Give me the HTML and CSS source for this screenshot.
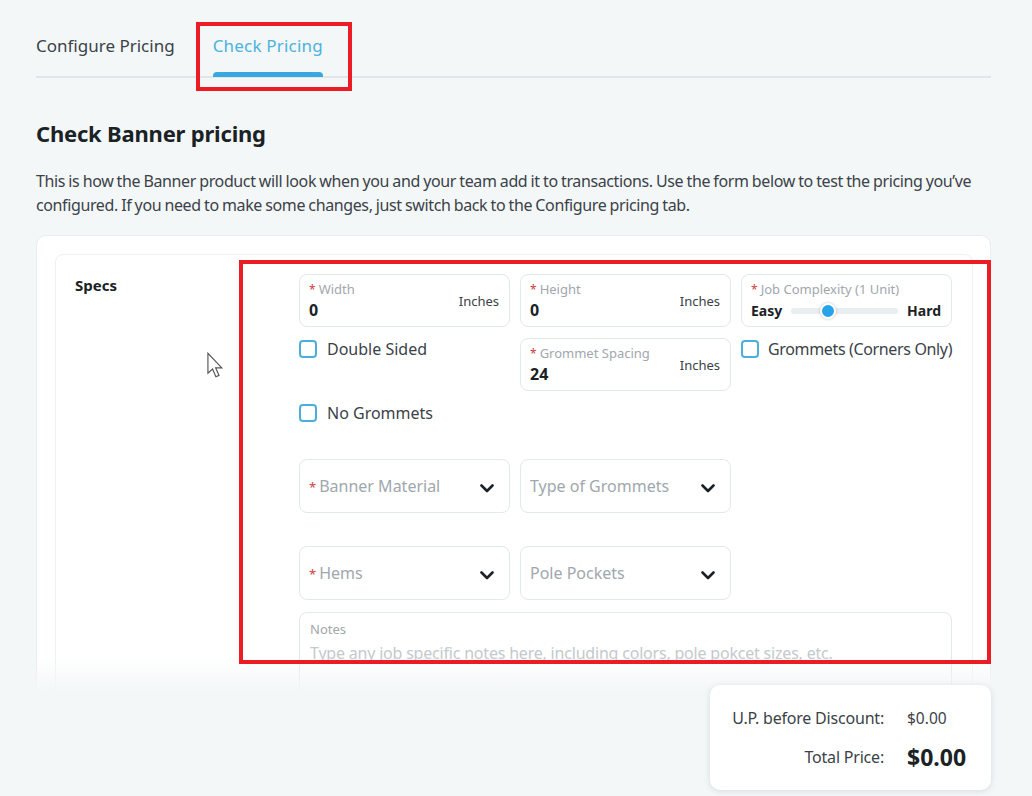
FILE: index.html
```html
<!DOCTYPE html>
<html>
<head>
<meta charset="utf-8">
<link rel="stylesheet" href="styles.css">
</head>
<body>
<div class="viewport">
  <div class="page">
    <nav class="tabs">
      <div class="tab">Configure Pricing</div>
      <div class="tab active">Check Pricing</div>
    </nav>
    <h1 class="title">Check Banner pricing</h1>
    <p class="intro">This is how the Banner product will look when you and your team add it to transactions. Use the form below to test the pricing you’ve configured. If you need to make some changes, just switch back to the Configure pricing tab.</p>
    <div class="card">
      <section class="section">
        <div class="section-label">Specs</div>
        <div class="form">
          <div class="field">
            <div class="field-main">
              <div class="flabel"><span class="req">*</span>Width</div>
              <div class="fvalue">0</div>
            </div>
            <div class="unit">Inches</div>
          </div>
          <div class="field">
            <div class="field-main">
              <div class="flabel"><span class="req">*</span>Height</div>
              <div class="fvalue">0</div>
            </div>
            <div class="unit">Inches</div>
          </div>
          <div class="field slider-field">
            <div class="flabel"><span class="req">*</span>Job Complexity (1 Unit)</div>
            <div class="slider-row">
              <span class="slabel">Easy</span>
              <div class="track"><span class="thumb"></span></div>
              <span class="slabel">Hard</span>
            </div>
          </div>

          <label class="check"><span class="box"></span>Double Sided</label>
          <div class="field">
            <div class="field-main">
              <div class="flabel"><span class="req">*</span>Grommet Spacing</div>
              <div class="fvalue">24</div>
            </div>
            <div class="unit">Inches</div>
          </div>
          <label class="check tight"><span class="box"></span>Grommets (Corners Only)</label>

          <label class="check row3"><span class="box"></span>No Grommets</label>

          <div class="select row4 col1"><span class="ph"><span class="req">*</span>Banner Material</span><svg class="chev" viewBox="0 0 14 9"><path d="M1.5 1.5 L7 7 L12.5 1.5"/></svg></div>
          <div class="select row4 col2"><span class="ph">Type of Grommets</span><svg class="chev" viewBox="0 0 14 9"><path d="M1.5 1.5 L7 7 L12.5 1.5"/></svg></div>

          <div class="select row5 col1"><span class="ph"><span class="req">*</span>Hems</span><svg class="chev" viewBox="0 0 14 9"><path d="M1.5 1.5 L7 7 L12.5 1.5"/></svg></div>
          <div class="select row5 col2"><span class="ph">Pole Pockets</span><svg class="chev" viewBox="0 0 14 9"><path d="M1.5 1.5 L7 7 L12.5 1.5"/></svg></div>

          <div class="notes">
            <div class="flabel">Notes</div>
            <div class="notes-ph">Type any job specific notes here, including colors, pole pokcet sizes, etc.</div>
          </div>
        </div>
      </section>
    </div>
  </div>
  <div class="fade"></div>
</div>
<footer class="footer">
  <div class="price-box">
    <div class="price-row"><span class="plabel">U.P. before Discount:</span><span class="pval">$0.00</span></div>
    <div class="price-row"><span class="plabel">Total Price:</span><span class="pval total">$0.00</span></div>
  </div>
</footer>

<div class="mark mark-tab"></div>
<div class="mark mark-form"></div>
<svg class="cursor" viewBox="0 0 13 21" width="18" height="27"><path d="M1 1 L1 16.5 L4.6 13.2 L7.2 19.2 L9.6 18.2 L7 12.3 L11.8 12.3 Z" fill="#fff" stroke="#555" stroke-width="0.9" stroke-linejoin="miter"/></svg>
</body>
</html>
```
FILE: styles.css
```css
* { box-sizing: border-box; }
html, body { margin: 0; padding: 0; }
body {
  background: #f3f7f8;
  font-family: "Noto Sans", "Open Sans", sans-serif;
  color: #3b4248;
  width: 1032px;
  height: 796px;
  overflow: hidden;
  position: relative;
}
.viewport {
  height: 690px;
  overflow: hidden;
  position: relative;
}
.page {
  padding: 0 41px 0 36px;
}
.tabs {
  display: flex;
  gap: 38px;
  height: 78px;
  border-bottom: 2px solid #e1e6e8;
}
.tab {
  font-size: 17px;
  line-height: 26px;
  padding-top: 33px;
  color: #3b4248;
  position: relative;
}
.tab.active { color: #4db2df; letter-spacing: 0.2px; }
.tab.active::after {
  content: "";
  position: absolute;
  left: 0; right: 0;
  bottom: -1px;
  height: 5px;
  background: #3aa8e0;
  border-radius: 4px 4px 0 0;
}
.title {
  margin: 40px 0 0;
  font-size: 22px;
  line-height: 30px;
  font-weight: 700;
  color: #1b2226;
  letter-spacing: -0.2px;
}
.intro {
  margin: 21px 0 0;
  font-size: 16px;
  line-height: 24px;
  color: #3b4248;
  letter-spacing: -0.38px;
  word-spacing: -0.5px;
}
.card {
  margin-top: 18px;
  background: #fff;
  border: 1px solid #e8edef;
  border-radius: 10px;
  padding: 18px 17px 0 18px;
  height: 600px;
}
.section {
  border: 1px solid #eef2f3;
  border-radius: 8px;
  display: grid;
  grid-template-columns: 243px 1fr;
  align-items: start;
  padding: 19px 20px 40px 0;
  height: 560px;
}
.section-label {
  padding-left: 19px;
  font-size: 15px;
  font-weight: 700;
  color: #1b2226;
  line-height: 22px;
}
.form {
  display: grid;
  grid-template-columns: 211px 211px 211px;
  column-gap: 10px;
  row-gap: 11px;
  align-items: start;
  align-content: start;
}
.field {
  height: 53px;
  border: 1px solid #e3e8ea;
  border-radius: 8px;
  padding: 6px 10px 0 9px;
  display: flex;
  justify-content: space-between;
  background: #fff;
}
.flabel {
  font-size: 13px;
  line-height: 16px;
  color: #a0a7ad;
  white-space: nowrap;
}
.req { color: #d0403f; margin-right: 3px; font-size: 12px; }
.fvalue {
  font-size: 16px;
  font-weight: 700;
  color: #1b2226;
  line-height: 22px;
  margin-top: 1px;
}
.unit {
  font-size: 13px;
  color: #3b4248;
  margin-top: 12px;
  line-height: 16px;
}
.slider-field { flex-direction: column; justify-content: flex-start; }
.slider-row {
  display: flex;
  align-items: center;
  margin-top: 4px;
  gap: 9px;
}
.slabel {
  font-size: 14px;
  font-weight: 700;
  color: #1b2226;
  line-height: 18px;
}
.track {
  flex: 1;
  height: 6px;
  background: #e9eef0;
  border-radius: 3px;
  position: relative;
}
.thumb {
  position: absolute;
  left: 29px;
  top: -5px;
  width: 16px;
  height: 16px;
  border-radius: 50%;
  background: #27a3ea;
  border: 2px solid #fff;
  box-shadow: 0 0 3px rgba(0,0,0,0.25);
}
.check {
  display: flex;
  align-items: center;
  gap: 10px;
  font-size: 16px;
  line-height: 22px;
  color: #3b4248;
  white-space: nowrap;
}
.check.tight { letter-spacing: -0.35px; gap: 9px; }
.box {
  width: 18px;
  height: 18px;
  border: 2px solid #4aafdc;
  border-radius: 4px;
  background: #fff;
  flex: none;
}
.row3 { grid-column: 1; }
.select {
  height: 54px;
  border: 1px solid #e3e8ea;
  border-radius: 8px;
  display: flex;
  align-items: center;
  justify-content: space-between;
  padding: 0 15px 0 9px;
  background: #fff;
}
.col1 { grid-column: 1; }
.col2 { grid-column: 2; }
.row4 { margin-top: 24px; }
.row5 { margin-top: 22px; }
.ph { font-size: 16px; color: #a0a7ad; line-height: 22px; }
.select .req { font-size: 13px; }
.chev { width: 14px; height: 9px; margin-top: 4px; }
.chev path { fill: none; stroke: #1b2226; stroke-width: 2.6; stroke-linecap: round; stroke-linejoin: round; }
.notes {
  grid-column: 1 / span 3;
  border: 1px solid #e3e8ea;
  border-radius: 8px;
  padding: 8px 10px 0;
  height: 90px;
  margin-top: 1px;
}
.notes-ph {
  font-size: 16px;
  color: #c3c9cd;
  line-height: 24px;
  margin-top: 4px;
  letter-spacing: -0.2px;
}
.fade {
  position: absolute;
  left: 0; right: 0; bottom: 0;
  height: 34px;
  background: linear-gradient(rgba(243,247,248,0), rgba(243,247,248,0.92));
}
.footer {
  display: flex;
  justify-content: flex-end;
  padding-right: 41px;
  margin-top: -5px;
  position: relative;
  z-index: 1;
}
.price-box {
  width: 281px;
  height: 105px;
  background: #fff;
  border-radius: 10px;
  box-shadow: 0 1px 6px rgba(40,60,70,0.14);
  padding: 21px 0 0 0;
  display: flex;
  flex-direction: column;
  gap: 15px;
}
.price-row {
  display: grid;
  grid-template-columns: 174px 1fr;
  column-gap: 23px;
  align-items: center;
}
.plabel { text-align: right; font-size: 16px; color: #3b4248; line-height: 24px; white-space: nowrap; letter-spacing: -0.2px; }
.pval { font-size: 15.5px; color: #3b4248; line-height: 24px; }
.pval.total { font-size: 23px; font-weight: 700; color: #1b2226; }
.mark {
  position: absolute;
  border: 4px solid #ec1c24;
  pointer-events: none;
  z-index: 2;
}
.mark-tab { left: 196px; top: 22px; width: 156px; height: 69px; }
.mark-form { left: 239px; top: 260px; width: 752px; height: 404px; }
.cursor { position: absolute; left: 206px; top: 352px; z-index: 2; }
```
